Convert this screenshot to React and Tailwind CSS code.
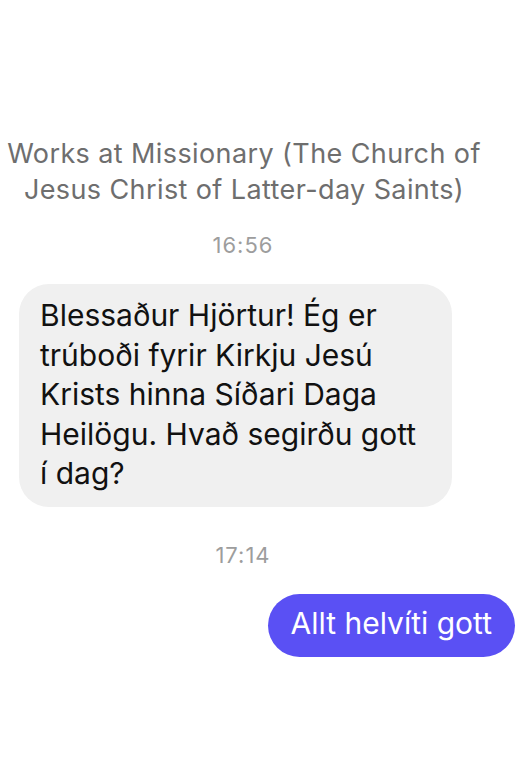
export default function App() {
  const font = { fontFamily: 'Inter, "Liberation Sans", sans-serif' };
  return (
    <div className="w-[526px] h-[768px] bg-white overflow-hidden" style={font}>
      <div className="pt-[136px] pr-[38px] text-center text-[27px] leading-[36px] tracking-[0.4px] text-[#6e6e6e]">
        Works at Missionary (The Church of
        <br />
        Jesus Christ of Latter-day Saints)
      </div>
      <div className="mt-[22px] pr-[40px] text-center text-[22px] leading-[30px] tracking-[1px] text-[#9d9d9d]">
        16:56
      </div>
      <div className="mt-[24px] pl-[19px]">
        <div className="w-[433px] rounded-[30px] bg-[#f0f0f0] pl-[21px] pt-[12px] pb-[13px] text-[30px] leading-[39.5px] text-[#111]">
          Blessaður Hjörtur! Ég er
          <br />
          trúboði fyrir Kirkju Jesú
          <br />
          Krists hinna Síðari Daga
          <br />
          Heilögu. Hvað segirðu gott
          <br />í dag?
        </div>
      </div>
      <div className="mt-[33px] pr-[40px] text-center text-[22px] leading-[30px] tracking-[1px] text-[#9d9d9d]">
        17:14
      </div>
      <div className="mt-[24px] flex justify-end pr-[11px]">
        <div className="h-[63px] rounded-full bg-[#5a50f4] px-[23px] pt-[10px] text-[30px] leading-[39px] text-white whitespace-nowrap">
          Allt helvíti gott
        </div>
      </div>
    </div>
  );
}
